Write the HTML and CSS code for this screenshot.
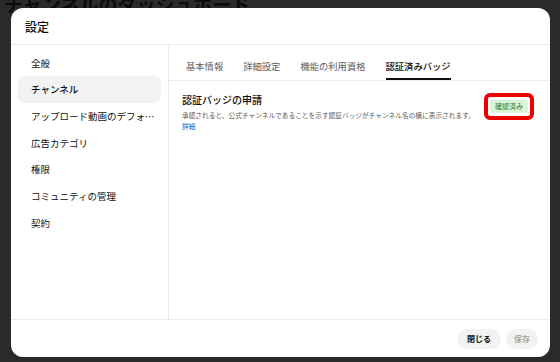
FILE: index.html
```html
<!DOCTYPE html>
<html lang="ja">
<head>
<meta charset="utf-8">
<link rel="stylesheet" href="styles.css">
</head>
<body>
<h1 class="page-title">チャンネルのダッシュボード</h1>
<div class="modal">
  <div class="modal-header">設定</div>
  <div class="modal-body">
    <nav class="sidebar">
      <div class="nav-item">全般</div>
      <div class="nav-item active">チャンネル</div>
      <div class="nav-item">アップロード動画のデフォルト設定</div>
      <div class="nav-item">広告カテゴリ</div>
      <div class="nav-item">権限</div>
      <div class="nav-item">コミュニティの管理</div>
      <div class="nav-item">契約</div>
    </nav>
    <main class="main">
      <div class="tabs">
        <div class="tab">基本情報</div>
        <div class="tab">詳細設定</div>
        <div class="tab">機能の利用資格</div>
        <div class="tab active">認証済みバッジ</div>
      </div>
      <section class="section">
        <div class="section-text">
          <div class="section-title">認証バッジの申請</div>
          <div class="section-desc">承認されると、公式チャンネルであることを示す認証バッジがチャンネル名の横に表示されます。</div>
          <a class="section-link">詳細</a>
        </div>
        <div class="highlight">
          <span class="badge">確認済み</span>
        </div>
      </section>
    </main>
  </div>
  <div class="modal-footer">
    <button class="btn">閉じる</button>
    <button class="btn disabled">保存</button>
  </div>
</div>
</body>
</html>
```

FILE: styles.css
```css
* { box-sizing: border-box; }
html, body {
  margin: 0;
  padding: 0;
  width: 560px;
  height: 362px;
  overflow: hidden;
  background: #2a2a2a;
  font-family: "Noto Sans CJK JP", "Noto Sans", sans-serif;
  color: #0f0f0f;
}
.page-title {
  margin: -9px 0 0 4px;
  font-size: 19px;
  font-weight: 700;
  color: #0b0b0b;
  line-height: 26px;
}
.modal {
  position: absolute;
  left: 11px;
  top: 8px;
  width: 539px;
  height: 349px;
  background: #fff;
  border-radius: 12px;
  display: flex;
  flex-direction: column;
  overflow: hidden;
}
.modal-header {
  height: 37px;
  padding: 10px 0 0 14px;
  font-size: 12px;
  line-height: 18px;
  font-weight: 500;
  border-bottom: 1px solid #ececec;
  flex: none;
}
.modal-body {
  flex: 1;
  display: flex;
  border-bottom: 1px solid #ececec;
}
.sidebar {
  width: 158px;
  border-right: 1px solid #ececec;
  padding: 4.5px 7px 0 7px;
  flex: none;
}
.nav-item {
  height: 26.7px;
  line-height: 26.7px;
  padding: 0 4px 0 13px;
  font-size: 9.5px;
  border-radius: 7px;
  white-space: nowrap;
  overflow: hidden;
  text-overflow: ellipsis;
}
.nav-item.active {
  background: #f2f2f2;
  font-weight: 500;
}
.main {
  flex: 1;
  display: flex;
  flex-direction: column;
}
.tabs {
  display: flex;
  gap: 20px;
  padding-left: 17px;
  border-bottom: 1px solid #ececec;
  height: 36px;
}
.tab {
  font-size: 9.3px;
  line-height: 12px;
  padding-top: 15px;
  height: 35px;
  color: #606060;
  border-bottom: 2px solid transparent;
}
.tab.active {
  color: #0f0f0f;
  font-weight: 500;
  border-bottom-color: #0f0f0f;
}
.section {
  display: flex;
  align-items: flex-start;
  padding: 12px 16px 0 13px;
  gap: 8px;
}
.section-text {
  flex: 1;
  display: flex;
  flex-direction: column;
}
.section-title {
  font-size: 10px;
  line-height: 14px;
  font-weight: 500;
  margin-bottom: 3px;
}
.section-desc {
  font-size: 6.7px;
  line-height: 10px;
  color: #606060;
  white-space: nowrap;
}
.section-link {
  font-size: 6.7px;
  line-height: 10px;
  color: #065fd4;
  margin-top: 1px;
}
.highlight {
  border: 4px solid #ee0000;
  border-radius: 6px;
  padding: 3px 2px;
  flex: none;
  display: flex;
}
.badge {
  background: #def4d6;
  color: #2b7a33;
  font-size: 7px;
  line-height: 13px;
  padding: 0 5px;
  border-radius: 2px;
}
.modal-footer {
  height: 37px;
  flex: none;
  display: flex;
  justify-content: flex-end;
  align-items: center;
  gap: 5px;
  padding: 0 12px 0 0;
}
.btn {
  border: none;
  font-family: inherit;
  background: #f2f2f2;
  border-radius: 10px;
  height: 20px;
  font-size: 8px;
  font-weight: 700;
  color: #0f0f0f;
  padding: 0 10px;
}
.btn.disabled {
  color: #9a9a9a;
  font-weight: 500;
  padding: 0 8px;
}
```
